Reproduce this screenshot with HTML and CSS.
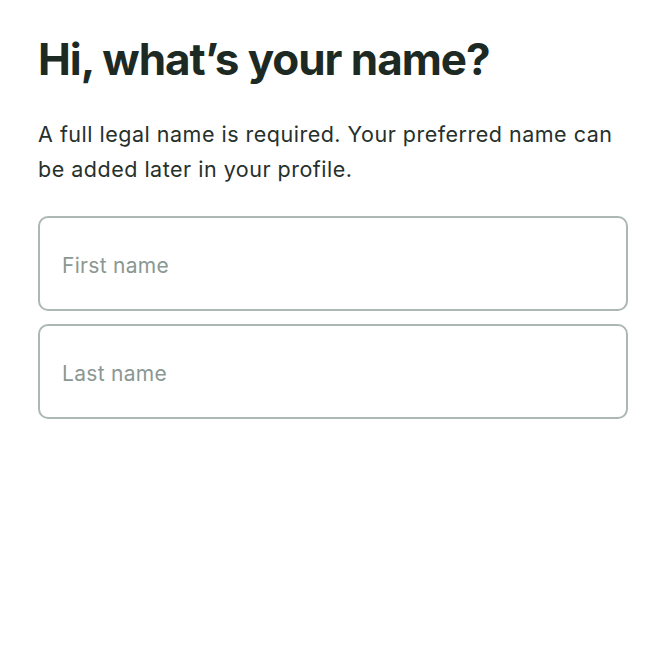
FILE: index.html
```html
<!DOCTYPE html>
<html>
<head>
<meta charset="utf-8">
<link rel="stylesheet" href="styles.css">
</head>
<body>
<main class="page">
  <h1 class="title">Hi, what’s your name?</h1>
  <p class="lead">A full legal name is required. Your preferred name can be added later in your profile.</p>
  <form class="fields">
    <div class="field"><span class="placeholder">First name</span></div>
    <div class="field"><span class="placeholder">Last name</span></div>
  </form>
</main>
</body>
</html>
```
FILE: styles.css
```css
html, body {
  margin: 0;
  padding: 0;
  background: #ffffff;
}
.page {
  padding: 30px 36px 0 38px;
  font-family: Inter, "Liberation Sans", sans-serif;
  color: #1d2a24;
}
.title {
  margin: 0;
  font-size: 44px;
  line-height: 58px;
  font-weight: 700;
  letter-spacing: -1.05px;
}
.lead {
  margin: 29px 0 0 0;
  font-size: 21.5px;
  line-height: 35px;
  color: #26302c;
  letter-spacing: 0.5px;
  max-width: 590px;
}
.fields {
  margin-top: 29px;
  display: flex;
  flex-direction: column;
  gap: 13px;
  width: 590px;
}
.field {
  height: 88px;
  border: 2px solid #aeb8b3;
  border-radius: 10px;
  display: flex;
  align-items: center;
  padding-left: 22px;
  padding-top: 3px;
  box-sizing: content-box;
}
.placeholder {
  font-size: 21px;
  color: #8b9792;
  letter-spacing: 0.3px;
}
```
